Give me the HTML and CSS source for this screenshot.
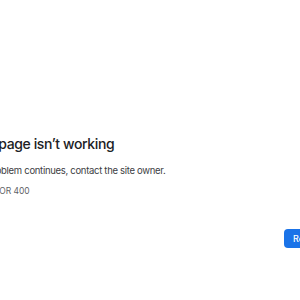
FILE: index.html
```html
<!DOCTYPE html>
<html lang="en">
<head>
    <meta charset="UTF-8">
    <title>This page isn’t working</title>
    <link rel="stylesheet" href="styles.css">
</head>
<body>
    <div class="interstitial">
        <div class="main-content">
            <h1 class="heading">This page isn’t working</h1>
            <p class="summary">If the problem continues, contact the site owner.</p>
            <div class="error-code">HTTP ERROR 400</div>
        </div>
        <div class="nav-wrapper">
            <button class="reload-btn">Reload</button>
        </div>
    </div>
</body>
</html>
```
FILE: styles.css
```css
* {
    margin: 0;
    padding: 0;
    box-sizing: border-box;
}

html, body {
    width: 100%;
    height: 100%;
    background-color: #fff;
    overflow: hidden;
}

body {
    font-family: Inter, Roboto, sans-serif;
    color: #202124;
}

.interstitial {
    width: 360px;
    margin-left: -32px;
    padding-top: 134px;
}

.heading {
    font-size: 14px;
    font-weight: 500;
    letter-spacing: -0.4px;
    line-height: 20px;
    white-space: nowrap;
}

.summary {
    margin-top: 10px;
    margin-left: -4.5px;
    font-size: 9.5px;
    letter-spacing: -0.3px;
    line-height: 14px;
    color: #3c4043;
    white-space: nowrap;
}

.error-code {
    margin-top: 7px;
    margin-left: -10px;
    font-size: 8.5px;
    line-height: 12px;
    color: #5f6368;
}

.nav-wrapper {
    margin-top: 29px;
}

.reload-btn {
    margin-left: 316px;
    background: #1a73e8;
    color: #fff;
    border: none;
    border-radius: 4px;
    padding: 0 9px;
    height: 19px;
    font-family: inherit;
    font-size: 9px;
    font-weight: 500;
}
```
